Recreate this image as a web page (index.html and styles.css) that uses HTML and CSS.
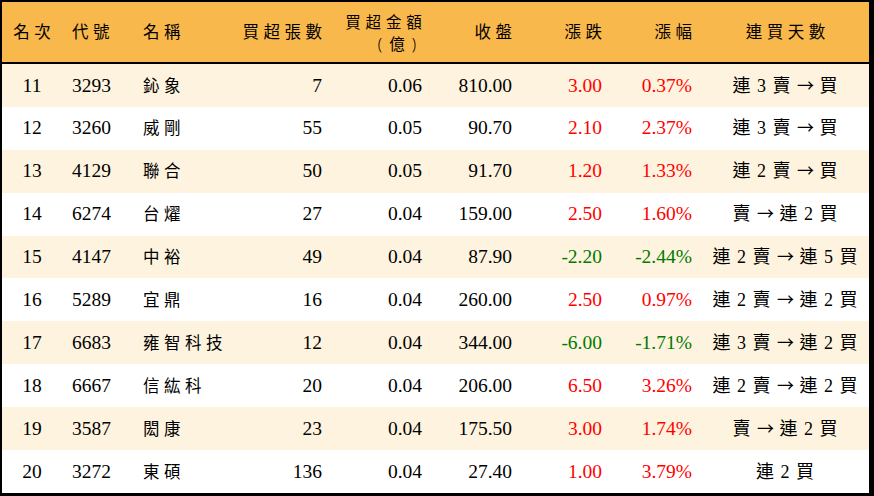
FILE: index.html
```
<!DOCTYPE html>
<html lang="zh-Hant">
<head>
<meta charset="utf-8">
<link rel="stylesheet" href="styles.css">
</head>
<body>
<div class="frame">
  <div class="table">
    <div class="row head">
      <div class="c c1"><span class="cj">名次</span></div>
      <div class="c c2"><span class="cj">代號</span></div>
      <div class="c c3"><span class="cj">名稱</span></div>
      <div class="c r"><span class="cj">買超張數</span></div>
      <div class="c r two"><span class="cj l1">買超金額</span><span class="cj paren"><span class="po">(</span>億<span class="pc">)</span></span></div>
      <div class="c r"><span class="cj">收盤</span></div>
      <div class="c r"><span class="cj">漲跌</span></div>
      <div class="c r"><span class="cj">漲幅</span></div>
      <div class="c c9"><span class="cj">連買天數</span></div>
    </div>
    <div class="row odd">
      <div class="c c1">11</div><div class="c c2">3293</div><div class="c c3"><span class="cj">鈊象</span></div>
      <div class="c r">7</div><div class="c r">0.06</div><div class="c r">810.00</div>
      <div class="c r up">3.00</div><div class="c r up">0.37%</div>
      <div class="c c9"><span class="seq">連 3 賣 <span class="ar">→</span> 買</span></div>
    </div>
    <div class="row">
      <div class="c c1">12</div><div class="c c2">3260</div><div class="c c3"><span class="cj">威剛</span></div>
      <div class="c r">55</div><div class="c r">0.05</div><div class="c r">90.70</div>
      <div class="c r up">2.10</div><div class="c r up">2.37%</div>
      <div class="c c9"><span class="seq">連 3 賣 <span class="ar">→</span> 買</span></div>
    </div>
    <div class="row odd">
      <div class="c c1">13</div><div class="c c2">4129</div><div class="c c3"><span class="cj">聯合</span></div>
      <div class="c r">50</div><div class="c r">0.05</div><div class="c r">91.70</div>
      <div class="c r up">1.20</div><div class="c r up">1.33%</div>
      <div class="c c9"><span class="seq">連 2 賣 <span class="ar">→</span> 買</span></div>
    </div>
    <div class="row">
      <div class="c c1">14</div><div class="c c2">6274</div><div class="c c3"><span class="cj">台燿</span></div>
      <div class="c r">27</div><div class="c r">0.04</div><div class="c r">159.00</div>
      <div class="c r up">2.50</div><div class="c r up">1.60%</div>
      <div class="c c9"><span class="seq">賣 <span class="ar">→</span> 連 2 買</span></div>
    </div>
    <div class="row odd">
      <div class="c c1">15</div><div class="c c2">4147</div><div class="c c3"><span class="cj">中裕</span></div>
      <div class="c r">49</div><div class="c r">0.04</div><div class="c r">87.90</div>
      <div class="c r down">-2.20</div><div class="c r down">-2.44%</div>
      <div class="c c9"><span class="seq">連 2 賣 <span class="ar">→</span> 連 5 買</span></div>
    </div>
    <div class="row">
      <div class="c c1">16</div><div class="c c2">5289</div><div class="c c3"><span class="cj">宜鼎</span></div>
      <div class="c r">16</div><div class="c r">0.04</div><div class="c r">260.00</div>
      <div class="c r up">2.50</div><div class="c r up">0.97%</div>
      <div class="c c9"><span class="seq">連 2 賣 <span class="ar">→</span> 連 2 買</span></div>
    </div>
    <div class="row odd">
      <div class="c c1">17</div><div class="c c2">6683</div><div class="c c3"><span class="cj">雍智科技</span></div>
      <div class="c r">12</div><div class="c r">0.04</div><div class="c r">344.00</div>
      <div class="c r down">-6.00</div><div class="c r down">-1.71%</div>
      <div class="c c9"><span class="seq">連 3 賣 <span class="ar">→</span> 連 2 買</span></div>
    </div>
    <div class="row">
      <div class="c c1">18</div><div class="c c2">6667</div><div class="c c3"><span class="cj">信紘科</span></div>
      <div class="c r">20</div><div class="c r">0.04</div><div class="c r">206.00</div>
      <div class="c r up">6.50</div><div class="c r up">3.26%</div>
      <div class="c c9"><span class="seq">連 2 賣 <span class="ar">→</span> 連 2 買</span></div>
    </div>
    <div class="row odd">
      <div class="c c1">19</div><div class="c c2">3587</div><div class="c c3"><span class="cj">閎康</span></div>
      <div class="c r">23</div><div class="c r">0.04</div><div class="c r">175.50</div>
      <div class="c r up">3.00</div><div class="c r up">1.74%</div>
      <div class="c c9"><span class="seq">賣 <span class="ar">→</span> 連 2 買</span></div>
    </div>
    <div class="row">
      <div class="c c1">20</div><div class="c c2">3272</div><div class="c c3"><span class="cj">東碩</span></div>
      <div class="c r">136</div><div class="c r">0.04</div><div class="c r">27.40</div>
      <div class="c r up">1.00</div><div class="c r up">3.79%</div>
      <div class="c c9"><span class="seq">連 2 買</span></div>
    </div>
  </div>
</div>
</body>
</html>
```
FILE: styles.css
```
html, body {
  margin: 0;
  padding: 0;
}
body {
  width: 874px;
  height: 496px;
  overflow: hidden;
  background: #000;
  font-family: "Liberation Serif", "Noto Sans CJK TC", serif;
  font-size: 19.5px;
  color: #000;
}
.frame {
  padding: 2px 5px 3px 2px;
  height: 496px;
  box-sizing: border-box;
}
.table {
  background: #fff;
  height: 491px;
  display: flex;
  flex-direction: column;
}
.row {
  display: grid;
  grid-template-columns: 60px 70px 100px 90px 100px 90px 90px 90px 1fr;
  height: 43px;
  align-items: center;
  background: #fff;
}
.row.odd {
  background: #fef3de;
}
.row.head {
  height: 60px;
  background: #f9b84b;
  border-bottom: 2px solid #000;
}
.c {
  white-space: nowrap;
  line-height: 1;
}
.c1 { text-align: center; }
.c2 { padding-left: 10px; }
.c3 { padding-left: 11px; }
.r { text-align: right; }
.c9 { text-align: center; padding-left: 10px; }
.cj {
  font-family: "Noto Sans CJK TC", sans-serif;
  font-size: 16.5px;
  letter-spacing: 4.5px;
}
.r .cj, .c9 .cj, .c1 .cj {
  margin-right: -4.5px;
}
.two {
  display: flex;
  flex-direction: column;
  align-items: flex-end;
  gap: 6px;
}
.two .cj {
  display: block;
  line-height: 16px;
  height: 16px;
  font-size: 15.5px;
}
.two .l1 {
  letter-spacing: 4.8px;
}
.paren {
  letter-spacing: 0;
  margin-right: 0 !important;
}
.po, .pc {
  display: inline-block;
  font-family: "Noto Sans", sans-serif;
  font-size: 15.5px;
  font-weight: 300;
}
.po { margin-right: 7px; }
.pc { margin-left: 7px; margin-right: 6px; }
.seq {
  font-family: "Liberation Serif", "Noto Sans CJK TC", serif;
  font-size: 18px;
  letter-spacing: 1px;
}
.ar {
  font-family: "Noto Sans CJK TC", sans-serif;
  font-size: 17px;
  letter-spacing: 0;
}
.up { color: #ff0000; }
.down { color: #007a00; }
```
